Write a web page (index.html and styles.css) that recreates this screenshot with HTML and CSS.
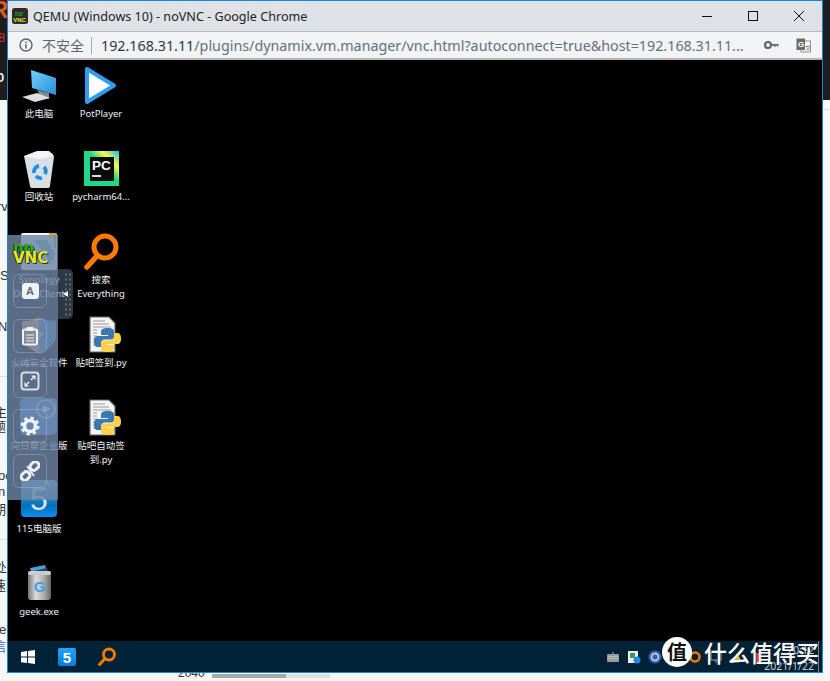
FILE: index.html
```html
<!DOCTYPE html>
<html lang="zh">
<head>
<meta charset="utf-8">
<title>QEMU (Windows 10) - noVNC - Google Chrome</title>
<link rel="stylesheet" href="styles.css">
</head>
<body>
<div class="page">
  <aside class="strip strip-left">
    <div class="dark-block">
      <span class="frag-r">R</span>
      <span class="frag-8">8</span>
      <span class="frag-0">0</span>
    </div>
    <div class="frag f-rv">rv</div>
    <div class="frag f-s">S</div>
    <div class="frag f-nb">NB</div>
    <div class="rule r1"></div>
    <div class="frag f-zhu">主题</div>
    <div class="frag f-ti">题目</div>
    <div class="frag f-oc">oc</div>
    <div class="frag f-n">n</div>
    <div class="frag f-qi">期限</div>
    <div class="rule r2"></div>
    <div class="frag f-chu">处理</div>
    <div class="frag f-su">速度</div>
    <div class="frag f-el">el</div>
    <div class="frag f-xin">信息</div>
  </aside>

  <main class="window">
    <header class="titlebar">
      <svg class="favicon" viewBox="0 0 16 16"><rect width="16" height="16" rx="2.500" fill="#2c2c2c"/><text x="3" y="7.500" class="fav-no">no</text><text x="1.200" y="13.500" class="fav-vnc">VNC</text></svg>
      <span class="title">QEMU (Windows 10) - noVNC - Google Chrome</span>
      <div class="winctl">
        <svg viewBox="0 0 12 12"><path d="M1 6.500h10" stroke="#111" fill="none"/></svg>
        <svg viewBox="0 0 12 12"><rect x="1.500" y="1.500" width="9" height="9" stroke="#111" fill="none"/></svg>
        <svg viewBox="0 0 12 12"><path d="M1 1l10 10M11 1L1 11" stroke="#111" fill="none"/></svg>
      </div>
    </header>
    <div class="addressbar">
      <svg class="info" viewBox="0 0 14 14"><circle cx="7" cy="7" r="6" fill="none" stroke="#5f6368" stroke-width="1.400"/><path d="M7 6v4.400M7 3.400v1.500" stroke="#5f6368" stroke-width="1.500"/></svg>
      <span class="insecure">不安全</span>
      <span class="sep"></span>
      <span class="url"><span class="host">192.168.31.11</span>/plugins/dynamix.vm.manager/vnc.html?autoconnect=true&amp;host=192.168.31.11...</span>
      <svg class="key" viewBox="0 0 15 10"><circle cx="4" cy="5" r="3" fill="none" stroke="#666" stroke-width="2.200"/><path d="M6.500 4h8v2.600h-1.500V5.800h-1.500v1h-1.500v-1H6.500z" fill="#666"/></svg>
      <svg class="translate" viewBox="0 0 15 15"><rect x="5" y="3" width="9.500" height="11" fill="#fff" stroke="#777" stroke-width=".8"/><rect x=".5" y=".5" width="8.500" height="11.500" fill="#6b6b6b"/><text x="2" y="9" class="tr-g">G</text><text x="9" y="12" class="tr-a">文</text></svg>
    </div>

    <section class="desktop">
      <svg class="defs" width="0" height="0"><defs><g id="pyfile"><path d="M9 2h19l6 6v29H9z" fill="#f4f4f4" stroke="#666" stroke-width="1.200"/><path d="M12 6h12M12 9h16M12 12h18M12 15h4M12 18h4M12 21h4M12 24h4M12 27h4M12 30h4" stroke="#9a9a9a"/><path d="M27 13c-5 0-7 1-7 4v3h7v1H17c-3 0-4 2-4 5.500s1 5.500 4 5.500h3v-3.500c0-3 2-4 4-4h6c2 0 3-1 3-3V17c0-3-2-4-6-4z" fill="#3a78b0"/><path d="M26 37c5 0 7-1 7-4v-3h-7v-1h10c3 0 4-2 4-5.500s-1-5.500-4-5.500h-3v3.500c0 3-2 4-4 4h-6c-2 0-3 1-3 3V33c0 3 2 4 6 4z" fill="#fdd24a"/></g></defs></svg>
      <div class="icons">
        <div class="cell">
          <svg class="ico" viewBox="0 0 40 40"><defs><linearGradient id="scr" x1="0" y1="0" x2="1" y2="1"><stop offset="0" stop-color="#6fd0fb"/><stop offset="1" stop-color="#2a8ed8"/></linearGradient></defs><path d="M18 24l12 3v6l-8-2z" fill="#7d8b96"/><path d="M12 4l25 8v17L13 22z" fill="url(#scr)"/><path d="M3 31l15-4 13 5-15 4z" fill="#dcdfe2"/></svg>
          <span class="label">此电脑</span>
        </div>
        <div class="cell">
          <svg class="ico" viewBox="0 0 40 40"><path d="M5 7l28-3 2 4-4 29a2 2 0 0 1-2 2H13a2 2 0 0 1-2-2z" fill="#d8e0e4"/><path d="M5 7l13-5 12 0 5 5-16 3z" fill="#f3f5f6"/><g fill="none" stroke="#1f8fe6" stroke-width="3.800"><path d="M15 24a6 6 0 0 1 5-7"/><path d="M25 18a6 6 0 0 1 1 7"/><path d="M23 29a6 6 0 0 1-6-2"/></g></svg>
          <span class="label">回收站</span>
        </div>
        <div class="cell">
          <svg class="ico" viewBox="0 0 40 40"><rect x="2" y="1" width="36" height="37" rx="2" fill="#f2f4f5"/><path d="M14 8h14l8 14-4 10-8-12z" fill="#7cc4e0"/><path d="M36 2v14" stroke="#9ad02a" stroke-width="2"/><path d="M30 2h7" stroke="#e6a020" stroke-width="2"/></svg>
          <span class="label">Synology<br>Drive Client</span>
        </div>
        <div class="cell">
          <svg class="ico" viewBox="0 0 40 40"><path d="M20 2c5 3 10 4 17 4v14c0 9-8 15-17 18C11 35 3 29 3 20V6c7 0 12-1 17-4z" fill="#e9a45a"/><path d="M20 2c5 3 10 4 17 4v14c0 9-8 15-17 18z" fill="#3f8ad8"/><path d="M12 10l12 9-8 12z" fill="#f3d070"/></svg>
          <span class="label">火绒安全软件</span>
        </div>
        <div class="cell">
          <svg class="ico" viewBox="0 0 40 40"><rect x="1" y="0" width="37" height="37" rx="5" fill="#3f8fe6"/><circle cx="27" cy="11" r="9" fill="none" stroke="#d9e8f6" stroke-width="2"/><path d="M24 7l8 4-8 4z" fill="#fff"/></svg>
          <span class="label">向日葵企业版</span>
        </div>
        <div class="cell">
          <svg class="ico" viewBox="0 0 40 40"><defs><linearGradient id="t115" x1="0" y1="0" x2="0" y2="1"><stop offset="0" stop-color="#5fb6e6"/><stop offset=".7" stop-color="#0470b8"/><stop offset="1" stop-color="#0a90f5"/></linearGradient></defs><rect x="2" y="-1" width="36" height="37" rx="4" fill="url(#t115)"/><text x="20" y="29" class="five">5</text></svg>
          <span class="label">115电脑版</span>
        </div>
        <div class="cell">
          <svg class="ico" viewBox="0 0 40 40"><defs><linearGradient id="can" x1="0" y1="0" x2="1" y2="0"><stop offset="0" stop-color="#777"/><stop offset=".35" stop-color="#dcdcdc"/><stop offset=".7" stop-color="#aaa"/><stop offset="1" stop-color="#666"/></linearGradient></defs><path d="M11 4l15-3 2 6H12z" fill="#4aa3d8"/><path d="M14 7l14-3 2 6H15z" fill="#2d3f58"/><rect x="9" y="7" width="23" height="29" rx="3" fill="url(#can)"/><rect x="9" y="7" width="23" height="4" rx="2" fill="#ccc"/><text x="20.500" y="28" class="g-text">G</text></svg>
          <span class="label">geek.exe</span>
        </div>
        <div class="cell">
          <svg class="ico" viewBox="0 0 40 40"><path d="M6 3l27 16.500L6 36z" fill="#fff" stroke="#2e9df2" stroke-width="4" stroke-linejoin="round"/></svg>
          <span class="label">PotPlayer</span>
        </div>
        <div class="cell">
          <svg class="ico" viewBox="0 0 40 40"><defs><linearGradient id="pc" x1="0" y1="1" x2="1" y2="0"><stop offset="0" stop-color="#20d68a"/><stop offset=".55" stop-color="#21d789"/><stop offset=".75" stop-color="#fcf84a"/><stop offset="1" stop-color="#07c3f2"/></linearGradient></defs><rect x="3" y="2" width="35" height="35" fill="url(#pc)"/><rect x="9" y="8" width="24" height="24" fill="#0a0a0a"/><text x="11" y="21" class="pc-text">PC</text><rect x="11" y="26" width="9" height="2" fill="#ddd"/></svg>
          <span class="label">pycharm64...</span>
        </div>
        <div class="cell">
          <svg class="ico" viewBox="0 0 40 40"><circle cx="24" cy="15" r="11" fill="none" stroke="#f97a00" stroke-width="5"/><path d="M16 24L6 35" stroke="#f97a00" stroke-width="5.500" stroke-linecap="round"/></svg>
          <span class="label">搜索<br>Everything</span>
        </div>
        <div class="cell">
          <svg class="ico" viewBox="0 0 40 40"><use href="#pyfile"/></svg>
          <span class="label">贴吧签到.py</span>
        </div>
        <div class="cell">
          <svg class="ico" viewBox="0 0 40 40"><use href="#pyfile"/></svg>
          <span class="label">贴吧自动签<br>到.py</span>
        </div>
      </div>

      <nav class="novnc">
        <div class="novnc-logo"><span class="logo-no">no</span><span class="logo-vnc">VNC</span></div>
        <div class="btn"><span class="key-a">A</span></div>
        <div class="btn"><svg viewBox="0 0 20 20"><rect x="3" y="3.500" width="14" height="15" rx="1.500" fill="none" stroke="#eef1f5" stroke-width="2"/><rect x="6.500" y="1" width="7" height="4" rx="1" fill="#eef1f5"/><path d="M6 9h8M6 12h8M6 15h8" stroke="#eef1f5"/></svg></div>
        <div class="btn"><svg viewBox="0 0 20 20"><rect x="1.500" y="1.500" width="17" height="17" rx="3" fill="none" stroke="#d7dde6" stroke-width="2"/><path d="M11 4.500h4.500V9zM9 15.500H4.500V11z" fill="#eef1f5"/><path d="M13 7l-2 2M7 13l2-2" stroke="#eef1f5" stroke-width="1.600"/></svg></div>
        <div class="btn"><svg viewBox="0 0 20 20"><circle cx="10" cy="10" r="5.500" fill="none" stroke="#eef1f5" stroke-width="3.600"/><circle cx="10" cy="10" r="8" fill="none" stroke="#eef1f5" stroke-width="3" stroke-dasharray="3.300 3"/></svg></div>
        <div class="btn"><svg viewBox="0 0 20 20"><g fill="none" stroke="#eef1f5" stroke-width="3"><rect x="10" y="1.500" width="9" height="7" rx="3" transform="rotate(-45 14.500 5)"/><rect x="1" y="11.500" width="9" height="7" rx="3" transform="rotate(-45 5.500 15)"/></g><path d="M7 5l7 10" stroke="#eef1f5" stroke-width="1.800"/></svg></div>
      </nav>
      <div class="handle"><span class="handle-arrow"></span><span class="handle-dots"></span></div>

      <footer class="taskbar">
        <div class="tb-btn"><svg class="win" viewBox="0 0 14 14"><path d="M0 2l6-1v5.500H0zM7 .9L14 0v6.500H7zM0 7.500h6V13l-6-.8zM7 7.500h7V14l-7-1z" fill="#fff"/></svg></div>
        <div class="tb-btn"><svg class="tile" viewBox="0 0 18 18"><defs><linearGradient id="t5" x1="0" y1="0" x2="0" y2="1"><stop offset="0" stop-color="#1fa8f5"/><stop offset="1" stop-color="#0a78e0"/></linearGradient></defs><rect width="18" height="18" rx="2" fill="url(#t5)"/><text x="9" y="14.500" class="five-sm">5</text></svg></div>
        <div class="tb-btn"><svg class="mag" viewBox="0 0 20 20"><circle cx="12" cy="7.500" r="5.500" fill="none" stroke="#f97a00" stroke-width="2.800"/><path d="M8 11.500L2.500 17.500" stroke="#f97a00" stroke-width="3" stroke-linecap="round"/></svg></div>
        <div class="tray">
          <svg class="t-ico" viewBox="0 0 14 12"><path d="M7 1v2" stroke="#aaa"/><rect x="1" y="3" width="12" height="8" rx="1" fill="#9a9a9a"/><path d="M2.500 5.500h9M2.500 7.500h9" stroke="#ddd" stroke-dasharray="1 1"/></svg>
          <svg class="t-ico" viewBox="0 0 14 14"><rect x="1" y="1" width="10" height="12" fill="#eee"/><rect x="3" y="3" width="5" height="5" fill="#3a9a50"/><circle cx="10" cy="10" r="3.500" fill="#1c8ce0"/></svg>
          <svg class="t-ico" viewBox="0 0 14 14"><circle cx="7" cy="7" r="6.500" fill="#3f5fb0"/><circle cx="7" cy="7" r="3.500" fill="none" stroke="#cfe0f6" stroke-width="1.500"/></svg>
          <span class="t-ico t-gap"></span>
          <svg class="t-ico" viewBox="0 0 14 14"><circle cx="7" cy="7" r="4.500" fill="none" stroke="#f97a00" stroke-width="2.500"/></svg>
          <svg class="t-ico" viewBox="0 0 14 14"><rect x="2" y="2" width="10" height="8" fill="none" stroke="#9aa3aa"/><path d="M7 10v3" stroke="#9aa3aa"/></svg>
          <svg class="t-ico" viewBox="0 0 14 14"><path d="M7 3l5 9H2z" fill="#f2c12e"/></svg>
          <svg class="t-ico t-last" viewBox="0 0 14 14"><rect x="3" y="3" width="8" height="9" fill="#d8404a"/></svg>
          <div class="clock"><span>20:12</span><span>2021/1/22</span></div>
        </div>
      </footer>

      <div class="watermark">
        <span class="wm-badge">值</span>
        <span class="wm-text">什么值得买</span>
      </div>
    </section>
  </main>

  <aside class="strip strip-right">
    <div class="dark-block"></div>
    <div class="rule r3"></div>
  </aside>

  <div class="bottom-strip">
    <span class="year">2040</span>
    <div class="track"><div class="thumb"></div></div>
  </div>
</div>
</body>
</html>
```

FILE: styles.css
```css
* { box-sizing: border-box; }
html, body { margin: 0; padding: 0; background: #f6f6f6; }
body { font-family: "Noto Sans", "Noto Sans CJK SC", sans-serif; }

.page {
  width: 830px;
  height: 681px;
  overflow: hidden;
  display: grid;
  grid-template-columns: 7px 816px 7px;
  grid-template-rows: 673px 8px;
}

/* page behind the popup window */
.strip { overflow: hidden; background: #f7f7f7; }
.dark-block { height: 100px; background: #1d1d1d; overflow: hidden; }
.frag-r { display: block; height: 20px; color: #e2541f; font: bold 24px/20px "Liberation Sans", sans-serif; margin-left: -9px; }
.frag-8 { display: block; margin-top: 10px; height: 16px; color: #d0342c; font: 13px/16px "Liberation Sans", sans-serif; margin-left: -2px; }
.frag-0 { display: block; margin-top: 24px; color: #f2f2f2; font: bold 13px/16px "Liberation Sans", sans-serif; margin-left: -3px; }
.frag {
  height: 14px;
  font: 13px/14px "Liberation Sans", "Noto Sans CJK SC", sans-serif;
  color: #333;
  white-space: nowrap;
}
.f-rv { margin-top: 100px; margin-left: -3px; }
.f-s { margin-top: 55px; }
.f-nb { margin-top: 37px; margin-left: -2px; }
.rule { height: 1px; background: #dcdcdc; }
.r1 { margin-top: 42px; }
.r2 { margin-top: 22px; }
.r3 { margin-top: 9px; }
.f-zhu { margin-top: 29px; margin-left: -6px; }
.f-ti { margin-left: -7px; }
.f-oc { margin-top: 35px; margin-left: -2px; }
.f-n { margin-top: 2px; margin-left: -2px; }
.f-qi { margin-top: 4px; margin-left: -7px; }
.f-chu { margin-top: 21px; margin-left: -6px; }
.f-su { margin-top: 4px; margin-left: -7px; }
.f-el { margin-top: 30px; margin-left: -1px; }
.f-xin { margin-top: 3px; margin-left: -7px; color: #3566c0; }

.bottom-strip {
  grid-column: 1 / -1;
  display: flex;
  align-items: flex-start;
  padding-left: 178px;
  overflow: hidden;
}
.year { width: 34px; height: 4px; overflow: hidden; font: 12px/0 "Liberation Sans", sans-serif; color: #333; }
.track { width: 118px; height: 4px; margin-top: 1px; background: #dfdfdf; }
.thumb { width: 74px; height: 4px; background: #a8a8a8; }

/* browser window */
.window {
  border: 1px solid #1c84d6;
  display: flex;
  flex-direction: column;
  overflow: hidden;
  background: #000;
}
.titlebar {
  height: 31px;
  flex: none;
  background: #dee1e6;
  border-bottom: 1px solid #b6babe;
  display: flex;
  align-items: center;
  padding-left: 4px;
}
.favicon { width: 16px; height: 16px; flex: none; }
.fav-no { font: bold 6.500px "Liberation Sans", sans-serif; fill: #2fa01c; }
.fav-vnc { font: bold 6px "Liberation Sans", sans-serif; fill: #e8e81c; }
.title { margin-left: 5px; font-size: 12.6px; color: #222; white-space: nowrap; }
.winctl { margin-left: auto; display: flex; margin-right: 17px; gap: 34px; }
.winctl svg { width: 12px; height: 12px; display: block; }

.addressbar {
  height: 28px;
  flex: none;
  background: #f1f3f4;
  border-bottom: 2px solid #b4b4b4;
  display: flex;
  align-items: center;
  padding: 0 11px;
}
.info { width: 14px; height: 14px; flex: none; }
.insecure { flex: none; margin-left: 9px; font-size: 14px; color: #5f6368; white-space: nowrap; font-family: "Noto Sans CJK SC", sans-serif; }
.sep { flex: none; width: 1px; height: 17px; background: #a8a8a8; margin: 0 9px 0 7px; }
.url { flex: none; font-size: 14.3px; color: #64707c; white-space: nowrap; }
.host { color: #2a3a4a; }
.key { width: 15px; height: 10px; margin-left: auto; flex: none; }
.translate { width: 15px; height: 15px; margin-left: 17px; flex: none; }
.tr-g { font: bold 8px "Liberation Sans", sans-serif; fill: #fff; }
.tr-a { font: 6px "Noto Sans CJK SC", sans-serif; fill: #666; }

/* remote desktop */
.desktop { position: relative; flex: 1; background: #000; display: flex; flex-direction: column; }
.icons {
  flex: 1;
  display: grid;
  grid-auto-flow: column;
  grid-template-rows: repeat(7, 83px);
  grid-auto-columns: 62px;
  align-content: start;
}
.cell {
  display: flex;
  flex-direction: column;
  align-items: center;
  padding-top: 6px;
}
.ico { width: 40px; height: 40px; flex: none; overflow: visible; margin-bottom: 1px; }
.label {
  font: 9.500px/13.500px "Noto Sans", "Noto Sans CJK SC", sans-serif;
  color: #f0f0f0;
  text-align: center;
  white-space: nowrap;
  text-shadow: 0 1px 1px #000;
}
.defs { position: absolute; }
.pc-text { font: bold 13.500px "Liberation Sans", sans-serif; fill: #fff; }
.five { font: 32px "Liberation Sans", sans-serif; fill: #d8e4ec; text-anchor: middle; }
.five-sm { font: bold 15px "Liberation Sans", sans-serif; fill: #fff; text-anchor: middle; }
.g-text { font: bold 15px "Liberation Sans", sans-serif; fill: #3aa4ea; text-anchor: middle; }

/* noVNC control bar */
.novnc {
  position: absolute;
  left: 0;
  top: 175px;
  width: 50px;
  height: 265px;
  background: rgba(110, 132, 163, 0.82);
  display: flex;
  flex-direction: column;
  padding: 8px 0 0 5px;
  gap: 11px;
}
.novnc-logo {
  height: 20px;
  width: 38px;
  display: flex;
  flex-direction: column;
  font: bold 15px/10px "DejaVu Sans", sans-serif;
  text-shadow: 1px 1px 0 #16303a, -1px 0 0 #16303a;
}
.logo-no { color: #35b012; }
.logo-vnc { color: #e8e81e; }
.btn {
  width: 34px;
  height: 34px;
  border: 1px solid rgba(255, 255, 255, 0.22);
  border-radius: 6px;
  display: flex;
  align-items: center;
  justify-content: center;
}
.btn svg { width: 20px; height: 20px; }
.key-a {
  width: 17px;
  height: 16px;
  border-radius: 3px;
  background: #eef1f5;
  color: #5c6a80;
  font: bold 11px/16px "Liberation Sans", sans-serif;
  text-align: center;
}
.handle {
  position: absolute;
  left: 50px;
  top: 209px;
  width: 15px;
  height: 50px;
  border-radius: 0 5px 5px 0;
  background: rgba(110, 132, 163, 0.42);
  display: flex;
  align-items: center;
}
.handle-arrow {
  margin-left: 5px;
  width: 0;
  height: 0;
  border-style: solid;
  border-width: 3.500px 5px 3.500px 0;
  border-color: transparent #fff transparent transparent;
}
.handle-dots {
  position: absolute;
  left: 6px;
  top: 3px;
  width: 8px;
  height: 44px;
  background-image: radial-gradient(circle, rgba(255, 255, 255, 0.22) 1px, transparent 1.300px);
  background-size: 4px 5px;
}

/* taskbar */
.taskbar {
  height: 32px;
  flex: none;
  background: #012137;
  display: flex;
  align-items: center;
}
.tb-btn { width: 39px; display: flex; justify-content: center; align-items: center; }
.win { width: 14px; height: 14px; margin-left: 1px; }
.tile { width: 18px; height: 18px; margin-left: 1px; }
.mag { width: 20px; height: 20px; margin-left: 2px; }
.tray { margin-left: auto; margin-right: 3px; height: 100%; display: flex; align-items: center; border-right: 1px solid #71808c; padding-right: 4px; }
.t-ico { width: 14px; height: 14px; margin-right: 7px; flex: none; }
.t-gap { width: 12px; }
.t-last { margin-right: 1px; }
.clock { display: flex; flex-direction: column; align-items: flex-end; font-size: 10.500px; line-height: 16px; color: #c8d0d6; white-space: nowrap; width: 48px; padding-top: 2px; }

/* site watermark */
.watermark {
  position: absolute;
  right: 3px;
  bottom: 6px;
  display: flex;
  align-items: center;
}
.wm-badge {
  width: 30px;
  height: 30px;
  border-radius: 50%;
  background: #fff;
  color: #111;
  font: 700 20px/30px "Noto Sans CJK SC", sans-serif;
  text-align: center;
  margin-right: 12px;
}
.wm-text {
  font: 500 23px/28px "Noto Sans CJK SC", sans-serif;
  color: #fff;
  white-space: nowrap;
  text-shadow: 0 0 1px #333;
}
```
